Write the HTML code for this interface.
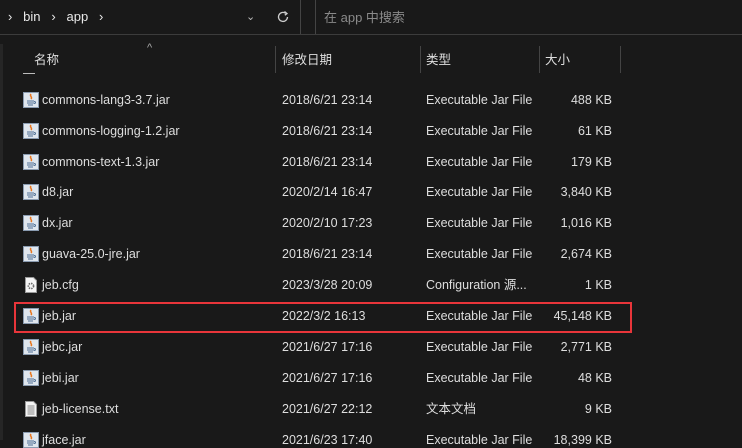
<!DOCTYPE html>
<html><head><meta charset="utf-8"><style>
*{margin:0;padding:0;box-sizing:border-box}
body{width:742px;height:440px;overflow:hidden;background:#191919;font-family:"Liberation Sans","Noto Sans CJK SC",sans-serif;font-size:12.5px;line-height:16px;color:#dedede;position:relative}
.a{position:absolute;white-space:nowrap;line-height:16px}
.sep{position:absolute;top:46px;height:27px;width:1px;background:#444}
.ic{position:absolute;left:23px;width:16px;height:16px}
.red{position:absolute;left:14px;top:302px;width:618px;height:31px;border:2px solid #e8353a}
</style></head><body>
<div class="a" style="left:-1px;top:0;width:302px;height:35px;border:1px solid #444;border-top:none"></div>
<div class="a" style="left:315px;top:0;width:440px;height:35px;border:1px solid #444;border-top:none"></div>
<div class="a" style="left:0;top:34px;width:742px;height:1px;background:#3c3c3c"></div>
<div class="a" style="left:8px;top:9px;font-size:13px;color:#e8e8e8">›&nbsp;&nbsp;&nbsp;bin&nbsp;&nbsp;&nbsp;›&nbsp;&nbsp;&nbsp;app&nbsp;&nbsp;&nbsp;›</div>
<div class="a" style="left:246px;top:9px;color:#bbb;font-size:11px">⌄</div>
<svg class="a" style="left:276px;top:10px" width="14" height="14" viewBox="0 0 14 14"><path d="M11.5 7A4.5 4.5 0 1 1 9.8 3.4" fill="none" stroke="#ccc" stroke-width="1.3"/><path d="M8.5 1.5L11 3.6 8.8 5.2" fill="none" stroke="#ccc" stroke-width="1.3"/></svg>
<div class="a" style="left:324px;top:10px;color:#8a8a8a;font-size:13px">在 app 中搜索</div>
<div class="a" style="left:0;top:44px;width:3px;height:396px;background:#262626"></div>
<div class="a" style="left:147px;top:40px;color:#aaa;font-size:11px">^</div>
<div class="a" style="left:34px;top:52px">名称</div>
<div class="a" style="left:282px;top:52px">修改日期</div>
<div class="a" style="left:426px;top:52px">类型</div>
<div class="a" style="left:545px;top:52px">大小</div>
<div class="sep" style="left:275px"></div><div class="sep" style="left:420px"></div><div class="sep" style="left:539px"></div><div class="sep" style="left:620px"></div>
<div class="a" style="left:23px;top:73px;width:12px;height:1px;background:#bbb"></div>
<div id="rows"></div>
<div class="red"></div>
<script>
var rows=[
["jar","commons-lang3-3.7.jar","2018/6/21 23:14","Executable Jar File","488 KB",100],
["jar","commons-logging-1.2.jar","2018/6/21 23:14","Executable Jar File","61 KB",131],
["jar","commons-text-1.3.jar","2018/6/21 23:14","Executable Jar File","179 KB",162],
["jar","d8.jar","2020/2/14 16:47","Executable Jar File","3,840 KB",192],
["jar","dx.jar","2020/2/10 17:23","Executable Jar File","1,016 KB",223],
["jar","guava-25.0-jre.jar","2018/6/21 23:14","Executable Jar File","2,674 KB",254],
["cfg","jeb.cfg","2023/3/28 20:09","Configuration 源...","1 KB",285],
["jar","jeb.jar","2022/3/2 16:13","Executable Jar File","45,148 KB",316],
["jar","jebc.jar","2021/6/27 17:16","Executable Jar File","2,771 KB",347],
["jar","jebi.jar","2021/6/27 17:16","Executable Jar File","48 KB",378],
["txt","jeb-license.txt","2021/6/27 22:12","文本文档","9 KB",409],
["jar","jface.jar","2021/6/23 17:40","Executable Jar File","18,399 KB",440]];
var h="";
rows.forEach(function(r){var t=r[5]-8;
var ic;
if(r[0]=="jar")ic='<svg class="ic" style="top:'+(r[5]-8)+'px" viewBox="0 0 16 16"><rect x=".5" y=".5" width="15" height="15" fill="#dfe6ee" stroke="#8a9bb0"/><path d="M8 2c-2 2 2 3 0 5" stroke="#e8761f" stroke-width="1.5" fill="none"/><path d="M4 9h7M4 11h7M5 13h5" stroke="#4f6f94" stroke-width="1.1"/><path d="M11 9.5c2 0 2 2 0 2" stroke="#4f6f94" fill="none"/></svg>';
else if(r[0]=="cfg")ic='<svg class="ic" style="top:'+(r[5]-8)+'px" viewBox="0 0 16 16"><path d="M2.5.5h8l3 3v12h-11z" fill="#f4f4f4" stroke="#999"/><circle cx="8" cy="9" r="2.6" fill="none" stroke="#666" stroke-width="1.6" stroke-dasharray="1.4 1"/></svg>';
else ic='<svg class="ic" style="top:'+(r[5]-8)+'px" viewBox="0 0 16 16"><path d="M2.5.5h8l3 3v12h-11z" fill="#f4f4f4" stroke="#999"/><path d="M4.5 5h7M4.5 7h7M4.5 9h7M4.5 11h7M4.5 13h7" stroke="#888"/></svg>';
h+=ic+'<div class="a" style="left:42px;top:'+t+'px">'+r[1]+'</div><div class="a" style="left:282px;top:'+t+'px">'+r[2]+'</div><div class="a" style="left:426px;top:'+t+'px">'+r[3]+'</div><div class="a" style="right:130px;top:'+t+'px">'+r[4]+'</div>';});
document.getElementById("rows").innerHTML=h;
</script>
</body></html>
